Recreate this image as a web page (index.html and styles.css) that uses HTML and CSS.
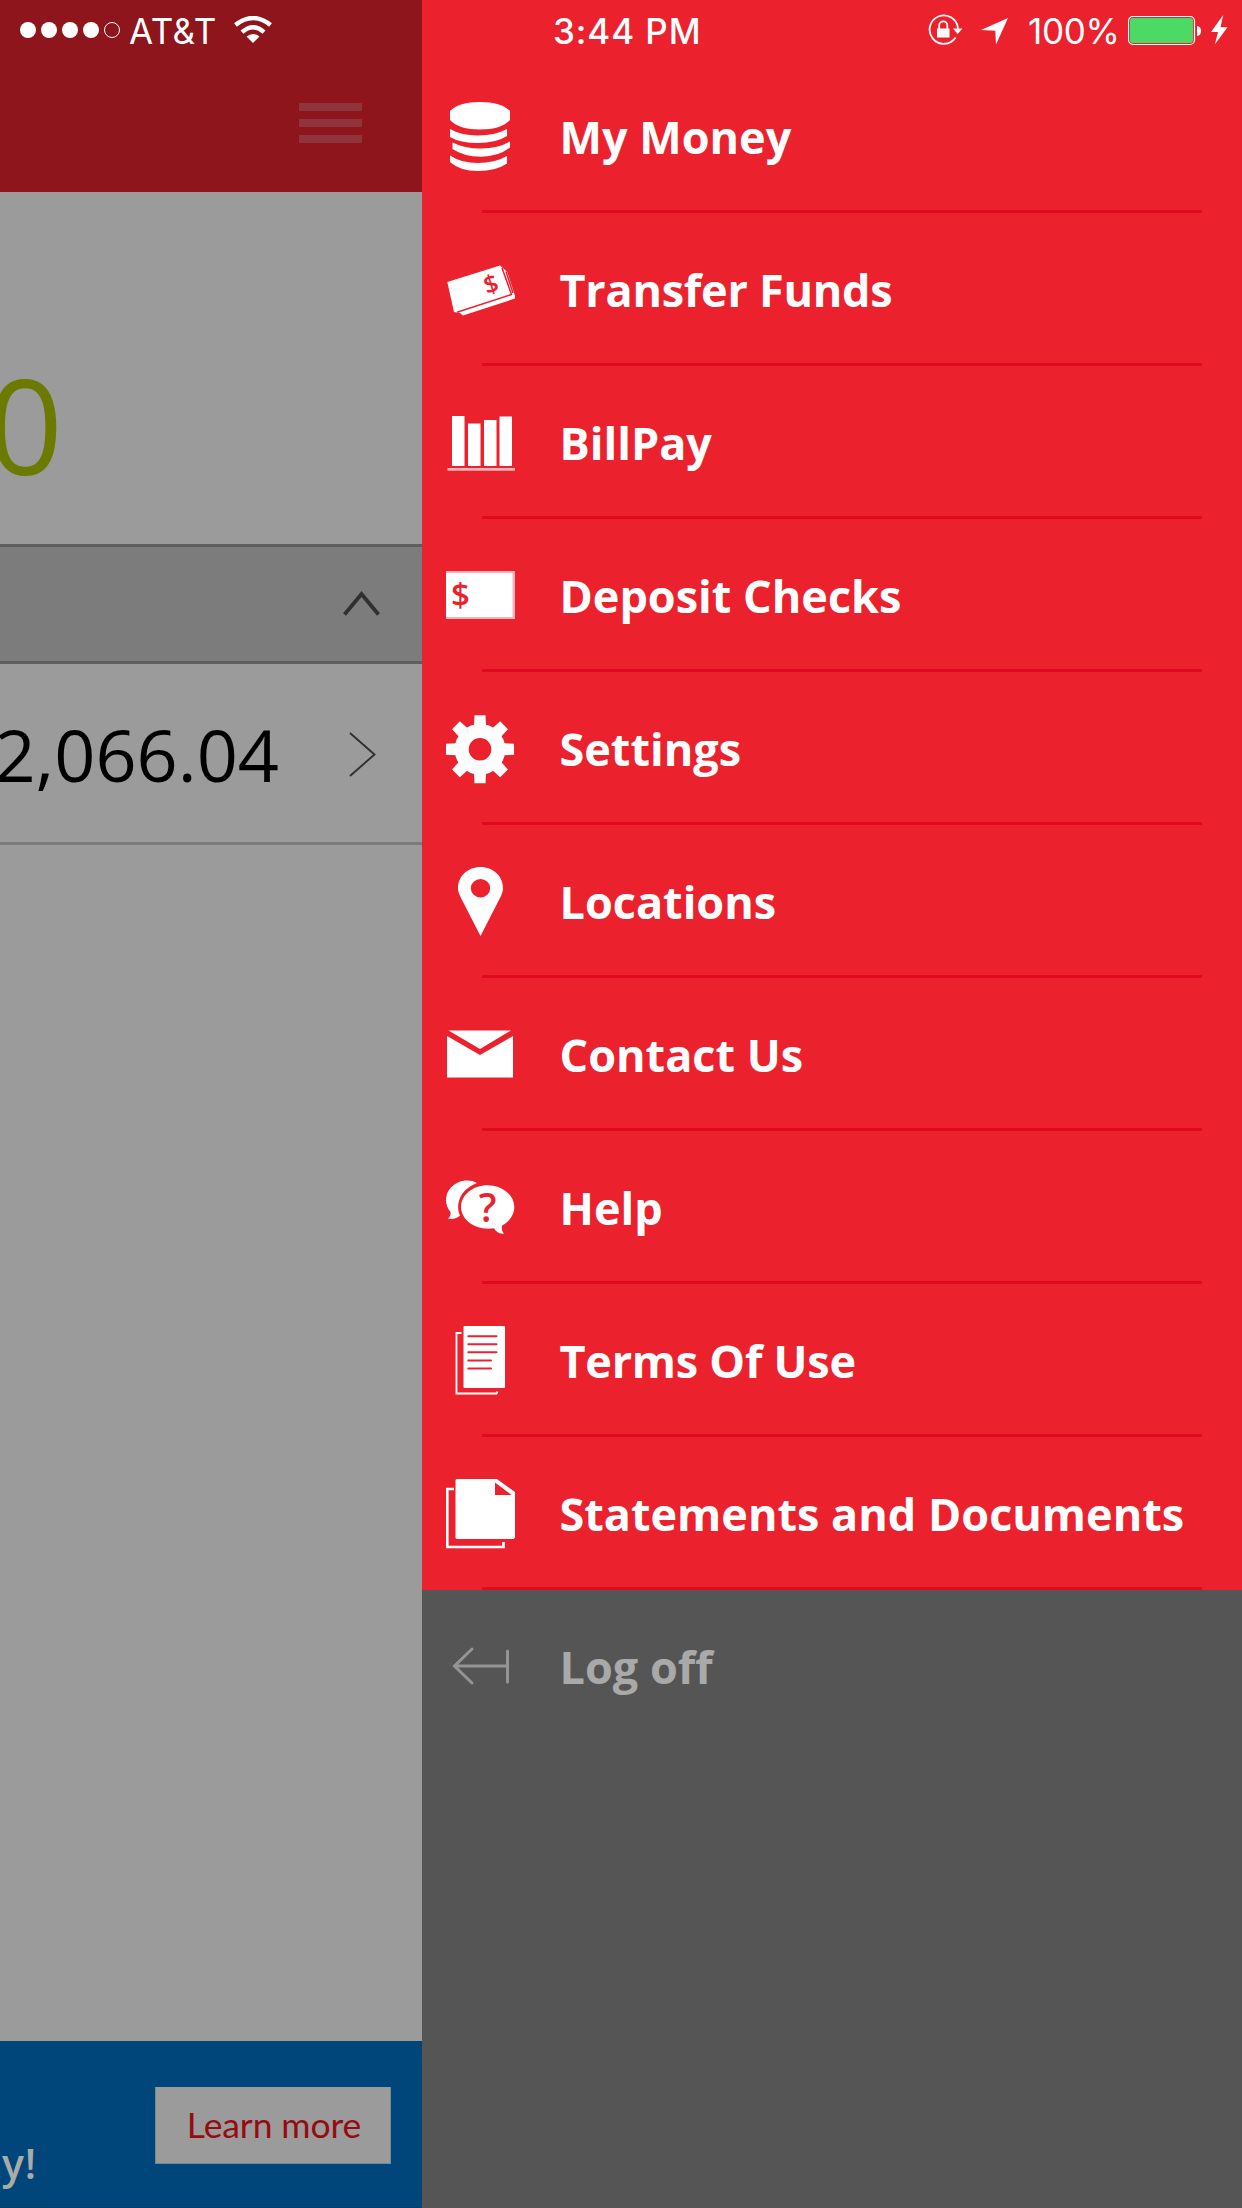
FILE: index.html
```html
<!DOCTYPE html>
<html lang="en">
<head>
<meta charset="utf-8">
<title>My Money</title>
<link rel="stylesheet" href="styles.css">
</head>
<body>
<div class="screen">
  <div class="status">
    <div class="status-left">
      <i class="dot"></i><i class="dot"></i><i class="dot"></i><i class="dot"></i><i class="dot empty"></i>
      <span class="carrier">AT&amp;T</span>
      <svg class="wifi" width="38" height="28" viewBox="0 0 38 28"><path d="M1.500 9Q19-5 36.500 9M8 16.200Q19 6.300 30 16.200" fill="none" stroke="#fff" stroke-width="4.400"/><path d="M12.500 20.500Q19 15.500 25.500 20.500L19 27Z" fill="#fff"/></svg>
    </div>
    <span class="time">3:44 PM</span>
    <div class="status-right">
      <svg class="lock" width="35" height="32" viewBox="0 0 35 32"><path d="M27.600 23.500A14.200 14.200 0 1 1 30 15" fill="none" stroke="#fff" stroke-width="1.800"/><path d="M25 14.500H34.500L29.700 20Z" fill="#fff"/><path d="M9 14.500H21.500V23.500H9Z" fill="#fff"/><path d="M11.200 15V11.500A4 4 0 0 1 19.300 11.500V15" fill="none" stroke="#fff" stroke-width="1.800"/></svg>
      <svg class="arrow" width="27" height="27" viewBox="0 0 27 27"><path d="M27 0L15 26.500L14.300 12.700L0 12Z" fill="#fff"/></svg>
      <span class="percent">100%</span>
      <svg class="battery" width="74" height="30" viewBox="0 0 74 30"><rect x=".5" y=".5" width="66" height="28" rx="4.500" fill="none" stroke="#fff" stroke-width="1.200"/><rect x="2" y="2" width="63" height="25" rx="3" fill="#4cd964"/><path d="M69 10Q73 10.500 73 15T69 20Z" fill="#fff"/></svg>
      <svg class="bolt" width="17" height="30" viewBox="0 0 17 30"><path d="M12.200 0L0 17H7L3.800 29.500L16.500 12.300H9.500Z" fill="#fff"/></svg>
    </div>
  </div>

  <main class="page">
    <header class="topbar"><div class="burger"><i></i><i></i><i></i></div></header>
    <section class="total"><span>0</span></section>
    <section class="group"><svg width="37" height="25" viewBox="0 0 37 25"><path d="M1.500 23.500L18.500 3L35.500 23.500" fill="none" stroke="#303030" stroke-width="3.800"/></svg></section>
    <section class="account"><span>2,066.04</span><svg width="27" height="45" viewBox="0 0 27 45"><path d="M1 1L25.500 22.500L1 44" fill="none" stroke="#303030" stroke-width="1.900"/></svg></section>
    <div class="blank"></div>
    <section class="promo"><span class="promo-text">y!</span><button class="promo-button">Learn more</button></section>
  </main>

  <nav class="menu">
    <a class="item"><svg class="icon" viewBox="0 0 69 69"><path d="M4 9Q13 0 34 0T64 9V18Q55 27.500 34 27.500T4 18Z"/><path d="M4 27Q15 33.500 32 33.500T61 27V34Q50 41 32 41T4 35Z"/><path d="M6.500 40.500Q18 46.500 35 46.500T64 39.500V45.500Q52 54.700 35 54.700T6.500 47Z"/><path d="M4 53.500Q15 61 32 61T61 54V61.500Q50 69 32 69T4 60Z"/></svg><span>My Money</span></a>
    <a class="item tight"><svg class="icon" viewBox="0 0 69 69"><path d="M1.300 27L54 10.500L61.300 17L69 41V43.500L17 60.500L14 58L8 57Z"/><path class="cut" d="M56 13L65.500 39.500L11 57.300M60 16.500L67 38"/><text class="bill-sign" x="45" y="38" transform="rotate(-17 45 29)">$</text></svg><span>Transfer Funds</span></a>
    <a class="item"><svg class="icon" viewBox="0 0 69 69"><path d="M6 8H18.500V58H6Z M22 15.500H34.500V58H22Z M38 12H50.500V58H38Z M53.500 8.500H66V58H53.500Z"/><path class="soft" d="M1.500 60H69V62.800H1.500Z"/></svg><span>BillPay</span></a>
    <a class="item"><svg class="icon" viewBox="0 0 69 69"><path class="soft" d="M0 10H69V58H0Z"/><path d="M0 12H66.500V56H0Z"/><text class="check-sign" x="14.500" y="46">$</text></svg><span>Deposit Checks</span></a>
    <a class="item"><svg class="icon" viewBox="0 0 69 69"><g transform="translate(34 35.300)"><path id="tooth" d="M-6-24L-5.500-34H5.500L6-24Z"/><use href="#tooth" transform="rotate(45)"/><use href="#tooth" transform="rotate(90)"/><use href="#tooth" transform="rotate(135)"/><use href="#tooth" transform="rotate(180)"/><use href="#tooth" transform="rotate(225)"/><use href="#tooth" transform="rotate(270)"/><use href="#tooth" transform="rotate(315)"/><circle r="18.300" fill="none" stroke="#fff" stroke-width="14"/></g></svg><span>Settings</span></a>
    <a class="item"><svg class="icon" viewBox="0 0 69 69"><path fill-rule="evenodd" d="M34.500 0C47 0 57 9 57 21C57 24 56 27 54.500 30L34.500 69L14.500 30C13 27 12 24 12 21C12 9 22 0 34.500 0ZM34.500 12A9.700 9.200 0 1 0 34.500 30.400A9.700 9.200 0 1 0 34.500 12Z"/></svg><span>Locations</span></a>
    <a class="item"><svg class="icon" viewBox="0 0 69 69"><path d="M2.500 10.500H65L34 29Z"/><path d="M1 16L34 35L67 16V57.500H1Z"/></svg><span>Contact Us</span></a>
    <a class="item"><svg class="icon" viewBox="0 0 69 69"><path d="M31 10C26 7 18 6.700 12 9.500C4 13 0 20 0 27C0 32 2 36 4.500 39C5 42 4 44 2 45.500C6 46.700 11 45.500 14 42.500C9.500 32 13 17 31 10Z"/><path d="M41.500 12.300C56 12.300 68.300 22 68.300 34C68.300 42 63 49 56 52.500C55.500 56 56 58.500 58 60.500C54 61.200 50 59 48 55.300C30 58 15 47 15 34C15 22 27 12.300 41.500 12.300Z"/><text class="help-sign" x="41.500" y="48.500">?</text></svg><span>Help</span></a>
    <a class="item tight"><svg class="icon" viewBox="0 0 69 69"><rect x="17.500" width="41.500" height="62" rx="1"/><path class="line" d="M15.500 7H10.500V67.500H50.500L51.500 65.500"/><path class="cut rules" d="M22.300 10.200H50.500M22.300 18.200H50.500M22.300 26.300H50.500M22.300 34.500H45M22.300 42.600H45"/></svg><span>Terms Of Use</span></a>
    <a class="item"><svg class="icon" viewBox="0 0 69 69"><path fill-rule="evenodd" d="M10.500 0H51L69 13V58.500L67.500 60H10.500L9.500 59V1ZM49 3.500V16H65.500Z"/><path class="line wide" d="M8 10H1.300V68H57.500V63"/></svg><span>Statements and Documents</span></a>
    <a class="item logoff"><svg class="icon" viewBox="0 0 69 69"><path d="M26 17L8.500 34L26 51M9 34H61M61.500 19V50"/></svg><span>Log off</span></a>
  </nav>
</div>
</body>
</html>
```
FILE: styles.css
```css
* { box-sizing: border-box; }
body { margin: 0; }
.screen {
  position: relative;
  display: flex;
  width: 1242px;
  height: 2208px;
  overflow: hidden;
  font-family: "Open Sans", "Noto Sans", sans-serif;
}

/* Status bar, drawn over both panes */
.status {
  position: absolute;
  inset: 0 0 auto 0;
  z-index: 2;
  height: 60px;
  display: grid;
  grid-template-columns: 553px 367px 1fr;
  color: #fff;
  font: 400 35px/60px Inter, sans-serif;
  white-space: nowrap;
}
.status-left, .status-right { display: flex; align-items: flex-start; }
.status-left { padding-left: 20px; }
.dot { flex: none; width: 16px; height: 16px; margin: 22px 5px 0 0; border-radius: 50%; background: #fff; }
.dot.empty { background: none; border: 1px solid #fff; }
.carrier { width: 105px; margin-left: 4px; padding-top: 1px; letter-spacing: .5px; }
.wifi { margin-top: 16px; }
.time { padding-top: 1px; font-weight: 500; letter-spacing: .9px; }
.lock { margin: 14px 0 0 8px; }
.arrow { margin: 18px 0 0 18px; }
.percent { width: 100px; margin-left: 20px; padding-top: 1px; letter-spacing: -.3px; }
.battery { margin-top: 16px; }
.bolt { margin: 15px 0 0 9px; }

/* Dimmed page behind the menu */
.page {
  width: 422px;
  height: 2208px;
  display: flex;
  flex-direction: column;
  overflow: hidden;
  background: #9b9b9b;
}
.topbar { height: 192px; padding: 103px 60px 0 0; background: #8d151b; }
.burger { display: flex; flex-direction: column; gap: 8px; width: 63px; margin-left: auto; }
.burger i { height: 8px; background: #8f343b; }
.total {
  height: 352px;
  width: 63px;
  padding-top: 142px;
  display: flex;
  justify-content: flex-end;
  color: #6d7a00;
  font-size: 132px;
  line-height: 180px;
}
.group {
  height: 120px;
  border: solid #5e5e5e;
  border-width: 3px 0;
  padding: 44px 0 0 343px;
  background: #7c7c7c;
}
.group svg, .account svg { display: block; }
.account {
  height: 181px;
  border-bottom: 3px solid #7c7c7c;
  display: flex;
  align-items: flex-start;
}
.account span {
  width: 279px;
  display: flex;
  justify-content: flex-end;
  padding-top: 41px;
  color: #000;
  font-size: 72px;
  line-height: 98px;
}
.account svg { margin: 68px 0 0 70px; }
.blank { flex: 1; }
.promo {
  height: 167px;
  display: flex;
  align-items: flex-start;
  background: #00467a;
  border-bottom: 1px solid #003d6a;
}
.promo-text { width: 155px; padding: 95px 0 0 2px; color: #a8aca8; font-size: 41px; line-height: 54px; font-weight: 600; letter-spacing: .8px; }
.promo-button {
  width: 236px;
  height: 77px;
  margin-top: 46px;
  padding: 0 0 0 2px;
  border: 1px solid #6f8c94;
  border-top: 0;
  background: #9b9b9b;
  color: #960b10;
  font: 400 35.5px/70px Lato, sans-serif;
  letter-spacing: -.1px;
}

/* Slide-out menu */
.menu { flex: 1; padding-top: 60px; background: linear-gradient(#eb222e 1590px, #555 1590px); }
.item {
  position: relative;
  height: 153px;
  display: flex;
  align-items: flex-start;
  padding: 42px 0 0 24px;
  color: #fff;
  font-size: 45px;
  font-weight: 700;
  line-height: 62px;
  white-space: nowrap;
}
.item:not(.logoff)::after {
  content: "";
  position: absolute;
  left: 60px;
  right: 40px;
  bottom: 0;
  height: 3px;
  background: #df0a1f;
}
.item span { margin: 4px 0 0 44.500px; }
.item.tight span { letter-spacing: -.25px; }
.icon { flex: none; width: 69px; height: 69px; fill: #fff; overflow: visible; }
.icon text { fill: #eb222e; text-anchor: middle; }
.bill-sign { font: 600 25px "Open Sans", sans-serif; }
.check-sign { font: 600 33px "Open Sans", sans-serif; }
.help-sign { font: 600 39px "Open Sans", sans-serif; }
.icon .cut { fill: none; stroke: #eb222e; stroke-width: 1.5; }
.icon .rules { stroke-width: 2; stroke-linecap: round; }
.icon .soft { opacity: .65; }
.icon .line { fill: none; stroke: #fff; stroke-width: 1.8; }
.icon .wide { stroke-width: 2.6; }
.logoff { color: #a9a9a9; }
.logoff .icon { fill: none; stroke: #949494; stroke-width: 3; stroke-linecap: round; }
```
